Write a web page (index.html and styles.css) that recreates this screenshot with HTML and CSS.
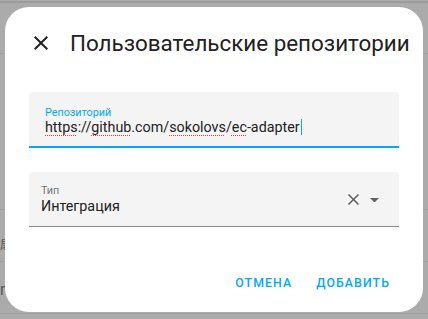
FILE: index.html
```html
<!DOCTYPE html>
<html lang="ru">
<head>
    <meta charset="UTF-8">
    <title>Пользовательские репозитории</title>
    <link rel="stylesheet" href="styles.css">
</head>
<body>
    <div class="backdrop-text backdrop-text-top">扇</div>
    <div class="backdrop-text backdrop-text-bottom">n</div>
    <div class="dialog">
        <div class="dialog-header">
            <button class="icon-button close-button" aria-label="Закрыть">
                <svg viewBox="0 0 24 24" width="24" height="24"><path d="M19,6.41L17.59,5L12,10.59L6.41,5L5,6.41L10.59,12L5,17.59L6.41,19L12,13.41L17.59,19L19,17.59L13.41,12L19,6.41Z"/></svg>
            </button>
            <h2 class="dialog-title">Пользовательские репозитории</h2>
        </div>

        <div class="dialog-content">
            <div class="textfield focused">
                <span class="field-label">Репозиторий</span>
                <div class="field-value"><span class="spell">https</span>://<span class="spell">github</span>.com/<span class="spell">sokolovs</span>/<span class="spell">ec</span>-adapter<span class="caret"></span></div>
            </div>

            <div class="select">
                <div class="select-text">
                    <span class="field-label">Тип</span>
                    <div class="field-value">Интеграция</div>
                </div>
                <svg class="select-clear" viewBox="0 0 24 24" width="19" height="19"><path d="M19,6.41L17.59,5L12,10.59L6.41,5L5,6.41L10.59,12L5,17.59L6.41,19L12,13.41L17.59,19L19,17.59L13.41,12L19,6.41Z"/></svg>
                <svg class="select-arrow" viewBox="0 0 10 5" width="9" height="4.5"><path d="M0 0 L5 5 L10 0 Z"/></svg>
            </div>
        </div>

        <div class="dialog-actions">
            <button class="text-button">Отмена</button>
            <button class="text-button">Добавить</button>
        </div>
    </div>
</body>
</html>
```

FILE: styles.css
```css
html, body {
    width: 100%;
    height: 100%;
    margin: 0;
    padding: 0;
}

body {
    box-sizing: border-box;
    padding: 7px 5px 0 5px;
    font-family: 'Roboto', 'Liberation Sans', sans-serif;
    color: #212121;
    background-color: #ababab;
    background-image:
        linear-gradient(#9c9c9c, #9c9c9c),
        linear-gradient(#a0a0a0, #a0a0a0),
        linear-gradient(#a0a0a0, #a0a0a0),
        linear-gradient(#a0a0a0, #a0a0a0),
        linear-gradient(#a0a0a0, #a0a0a0);
    background-size: 100% 2px, 100% 1px, 100% 1px, 100% 1px, 100% 1px;
    background-position: 0 1px, 0 53px, 0 209px, 0 261px, 0 313px;
    background-repeat: no-repeat;
    overflow: hidden;
    position: relative;
}

.backdrop-text {
    position: absolute;
    left: 0;
    color: #555;
    font-family: 'Noto Sans CJK SC', 'Roboto', sans-serif;
}

.backdrop-text-top {
    top: 235px;
    font-size: 12px;
}

.backdrop-text-bottom {
    top: 280px;
    font-size: 16px;
    font-family: 'Roboto', sans-serif;
}

.dialog {
    position: relative;
    width: 418px;
    height: 305px;
    background: #ffffff;
    border-radius: 24px;
    display: flex;
    flex-direction: column;
    box-sizing: border-box;
}

.dialog-header {
    display: flex;
    align-items: flex-start;
    padding: 24px 0 0 24px;
}

.icon-button {
    border: none;
    background: none;
    padding: 0;
    width: 24px;
    height: 24px;
    fill: #212121;
    cursor: pointer;
}

.close-button svg {
    display: block;
}

.dialog-title {
    margin: 0 0 0 17px;
    font-size: 22.4px;
    line-height: 24px;
    font-weight: 400;
    white-space: nowrap;
    color: #212121;
}

.dialog-content {
    padding: 0 24px;
    margin-top: 37px;
    display: flex;
    flex-direction: column;
    gap: 24px;
}

.textfield {
    box-sizing: border-box;
    height: 56px;
    background: #f4f4f4;
    border-radius: 4px 4px 0 0;
    border-bottom: 2px solid #03a9f4;
    padding: 14px 16px 0 16px;
}

.field-label {
    display: block;
    font-size: 10.8px;
    line-height: 13px;
    color: #03a9f4;
}

.field-value {
    font-size: 14.3px;
    line-height: 17px;
    white-space: nowrap;
}

.spell {
    text-decoration: underline dotted #e53935;
    text-decoration-thickness: 1px;
    text-underline-offset: 3px;
}

.caret {
    display: inline-block;
    width: 1px;
    height: 16px;
    background: #03a9f4;
    vertical-align: -3px;
    margin-left: 1px;
}

.select {
    box-sizing: border-box;
    height: 55px;
    background: #f4f4f4;
    border-radius: 4px 4px 0 0;
    border-bottom: 1px solid #8a8a8a;
    padding: 0 20px 0 12px;
    display: flex;
    align-items: center;
}

.select-text {
    flex: 1;
    align-self: flex-start;
    padding-top: 12px;
}

.select .field-label {
    color: #757575;
}

.select .field-value {
    margin-top: 1px;
}

.select-clear {
    fill: #616161;
    margin-right: 7px;
    margin-top: 1px;
}

.select-arrow {
    fill: #616161;
    margin-top: 2px;
}

.dialog-actions {
    margin-top: auto;
    display: flex;
    justify-content: flex-end;
    gap: 8px;
    padding: 0 25px 13px 0;
}

.text-button {
    border: none;
    background: none;
    padding: 8px;
    font-family: 'Roboto', 'Liberation Sans', sans-serif;
    font-size: 12.3px;
    line-height: 16px;
    font-weight: 500;
    letter-spacing: 1.1px;
    text-transform: uppercase;
    color: #03a9f4;
    cursor: pointer;
}
```
